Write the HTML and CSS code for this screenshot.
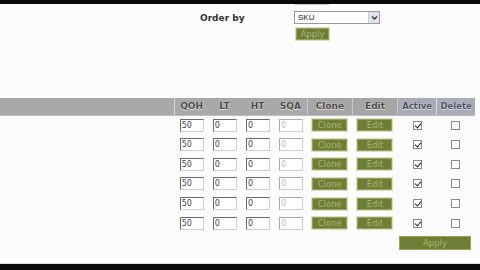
FILE: index.html
```html
<!DOCTYPE html>
<html>
<head>
<meta charset="utf-8">
<link rel="stylesheet" href="styles.css">
</head>
<body>
<div class="frame-bar top"></div>
<div class="page">
  <div class="filters-clip">
    <div class="filters">
      <div class="f-row cut">
        <div class="f-label"></div>
        <div class="f-ctrl"><span class="small-input"></span></div>
      </div>
      <div class="f-row order">
        <div class="f-label">Order by</div>
        <div class="f-ctrl">
          <div class="select"><span class="sel-text">SKU</span><span class="sel-btn"><svg width="9" height="9" viewBox="0 0 9 9"><path d="M2 3.5 L4.5 6 L7 3.5" fill="none" stroke="#333" stroke-width="1.4"/></svg></span></div>
        </div>
      </div>
      <div class="f-row tall">
        <div class="f-label"></div>
        <div class="f-ctrl"><span class="btn apply-sm">Apply</span></div>
      </div>
    </div>
  </div>

  <table class="grid">
    <thead>
      <tr>
        <th class="c-name"></th>
        <th class="c-num">QOH</th>
        <th class="c-num">LT</th>
        <th class="c-num">HT</th>
        <th class="c-num">SQA</th>
        <th class="c-btn sep">Clone</th>
        <th class="c-btn sep">Edit</th>
        <th class="c-chk blue">Active</th>
        <th class="c-chk blue">Delete</th>
      </tr>
    </thead>
    <tbody>
      <tr><td></td><td><span class="inp">50</span></td><td><span class="inp">0</span></td><td><span class="inp">0</span></td><td><span class="inp dis">0</span></td><td><span class="btn">Clone</span></td><td><span class="btn">Edit</span></td><td class="ctr"><span class="cb on"></span></td><td class="ctr"><span class="cb"></span></td></tr>
      <tr><td></td><td><span class="inp">50</span></td><td><span class="inp">0</span></td><td><span class="inp">0</span></td><td><span class="inp dis">0</span></td><td><span class="btn">Clone</span></td><td><span class="btn">Edit</span></td><td class="ctr"><span class="cb on"></span></td><td class="ctr"><span class="cb"></span></td></tr>
      <tr><td></td><td><span class="inp">50</span></td><td><span class="inp">0</span></td><td><span class="inp">0</span></td><td><span class="inp dis">0</span></td><td><span class="btn">Clone</span></td><td><span class="btn">Edit</span></td><td class="ctr"><span class="cb on"></span></td><td class="ctr"><span class="cb"></span></td></tr>
      <tr><td></td><td><span class="inp">50</span></td><td><span class="inp">0</span></td><td><span class="inp">0</span></td><td><span class="inp dis">0</span></td><td><span class="btn">Clone</span></td><td><span class="btn">Edit</span></td><td class="ctr"><span class="cb on"></span></td><td class="ctr"><span class="cb"></span></td></tr>
      <tr><td></td><td><span class="inp">50</span></td><td><span class="inp">0</span></td><td><span class="inp">0</span></td><td><span class="inp dis">0</span></td><td><span class="btn">Clone</span></td><td><span class="btn">Edit</span></td><td class="ctr"><span class="cb on"></span></td><td class="ctr"><span class="cb"></span></td></tr>
      <tr><td></td><td><span class="inp">50</span></td><td><span class="inp">0</span></td><td><span class="inp">0</span></td><td><span class="inp dis">0</span></td><td><span class="btn">Clone</span></td><td><span class="btn">Edit</span></td><td class="ctr"><span class="cb on"></span></td><td class="ctr"><span class="cb"></span></td></tr>
    </tbody>
  </table>
  <div class="footer-row"><span class="btn apply-lg">Apply</span></div>
</div>
<div class="frame-bar bottom"></div>
</body>
</html>
```

FILE: styles.css
```css
* { box-sizing: border-box; }
html, body { margin: 0; padding: 0; }
body {
  width: 480px;
  height: 270px;
  overflow: hidden;
  display: flex;
  flex-direction: column;
  background: #fcfcfc;
  font-family: "DejaVu Sans", Verdana, sans-serif;
  font-size: 8px;
  color: #333;
}
.frame-bar { background: #0a0a0a; flex: none; }
.frame-bar.top { height: 4px; }
.frame-bar.bottom { height: 7px; border-top: 1px solid #ddd; }
.page { flex: 1; display: flex; flex-direction: column; }

.filters-clip { height: 94px; overflow: hidden; flex: none; }
.filters { margin-top: -15px; padding-left: 200px; display: flex; flex-direction: column; }
.f-row { display: flex; height: 16px; align-items: center; }
.f-row.cut { align-items: flex-end; }
.f-row.order { height: 24px; padding-top: 1px; }
.f-row.tall { height: 20px; align-items: flex-start; }
.f-label { width: 94px; flex: none; font-weight: bold; font-size: 9px; color: #333; }
.f-ctrl { display: flex; align-items: center; }
.small-input { display: block; width: 35px; height: 13px; border: 1px solid #c8c8c8; background: #fff; }
.select {
  width: 86px; height: 13px;
  border: 1px solid #9a9a9a;
  background: #fff;
  display: flex; align-items: stretch;
}
.sel-text { flex: 1; padding-left: 3px; font-size: 8px; line-height: 11px; color: #222; font-family: "Liberation Sans", Arial, sans-serif; }
.sel-btn { width: 11px; background: #dfe4ee; border-left: 1px solid #c8cedc; display: flex; align-items: center; justify-content: center; }

.btn {
  display: inline-flex; align-items: center; justify-content: center;
  width: 35px; height: 12px;
  background: #6e7e34;
  border: 1px solid #94a55a;
  color: #a9b57a;
  font-size: 8.5px;
  font-family: "DejaVu Sans", Verdana, sans-serif;
  box-shadow: 0 0 0 1px #d9dfc4;
}
.apply-sm { width: 33px; height: 12px; margin-left: 2px; margin-top: -1px; }
.apply-lg { width: 72px; height: 14px; box-shadow: none; }

.grid { border-collapse: collapse; width: 475px; table-layout: fixed; flex: none; }
.grid th {
  background: #a9a9a9;
  height: 17px; padding: 0;
  font-size: 9px; font-weight: bold; color: #4e4a44;
  text-shadow: 0 0 1px #eee, 0 1px 0 #ddd;
  border-bottom: 1px solid #bdbdbd;
}
.grid th.c-name { width: 174px; border-right: 1px solid #d8d8d8; }
.grid th.c-num { width: 33px; }
.grid th.c-btn { width: 45px; }
.grid th.sep { border-left: 1px solid #c8c8c8; border-right: 1px solid #c8c8c8; background: #a6a6a6; }
.grid th.blue { background: #a8acb8; border-left: 1px solid #dcdde2; color: #4d4f5e; font-size: 8.5px; }
.grid th.c-chk { width: 39px; }
.grid th.c-chk:last-child { width: 38px; }
.grid td { height: 19.7px; padding: 0; vertical-align: middle; }
.grid td:nth-child(2), .grid td:nth-child(3), .grid td:nth-child(4), .grid td:nth-child(5) { padding-left: 5px; }
.grid td:nth-child(6), .grid td:nth-child(7) { padding-left: 5px; }
.ctr { text-align: center; }

.inp {
  display: block; width: 24px; height: 13px;
  background: #fff;
  border: 1px solid #cfcfcf;
  border-top-color: #6a6a6a; border-left-color: #6a6a6a;
  font-size: 8px; line-height: 11px; padding-left: 1px;
  color: #444;
}
.inp.dis { color: #bbb; border-top-color: #aaa; border-left-color: #aaa; }

.cb {
  display: inline-block; width: 9px; height: 9px;
  border: 1px solid #8a8a8a; background: #fff; position: relative; vertical-align: middle;
}
.cb.on::after {
  content: ""; position: absolute; left: 2px; top: 0px;
  width: 3px; height: 5px;
  border-right: 1.5px solid #222; border-bottom: 1.5px solid #222;
  transform: rotate(40deg);
}
.footer-row { display: flex; justify-content: flex-end; padding-right: 9px; padding-top: 3px; }
```
